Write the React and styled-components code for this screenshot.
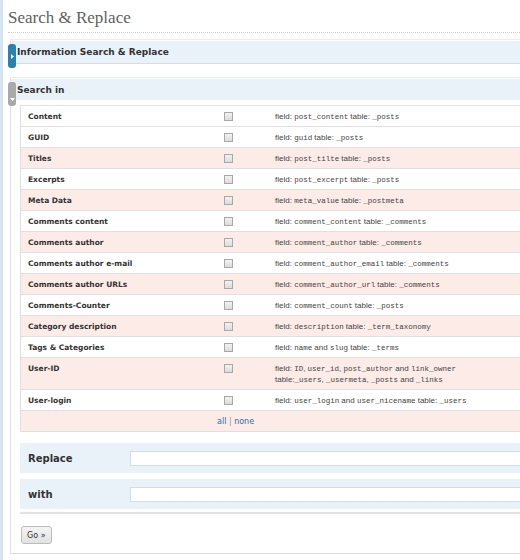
import React from 'react';
import styled, { createGlobalStyle } from 'styled-components';

const GlobalStyle = createGlobalStyle`
  html, body { margin: 0; padding: 0; background: #fff; }
  body { overflow: hidden; font-family: "DejaVu Sans", sans-serif; color: #333; }
  * { box-sizing: border-box; }
`;

const Page = styled.div`
  width: 520px;
  min-height: 560px;
  overflow: hidden;
  border-left: 3px solid #d5e4f1;
  padding-left: 5px;
`;

const Title = styled.h2`
  margin: 0;
  padding: 8px 0 4px;
  font: normal 17px/20px "Liberation Serif", serif;
  color: #5f5f5f;
  border-bottom: 1px dotted #cfcfcf;
`;

const Postbox = styled.div`
  position: relative;
  width: 620px;
  margin: ${(p) => p.$mt}px 0 0 2px;
  padding-top: 1px;
  border-top: 1px solid #ececec;
  border-left: 1px solid #e2e2e2;
  border-bottom: ${(p) => (p.$open ? '1px solid #dcdcdc' : 'none')};
`;

const Header = styled.h3`
  margin: 0;
  height: ${(p) => (p.$open ? 21 : 23)}px;
  padding-left: 6px;
  display: flex;
  align-items: center;
  background: #eaf2f9;
  border-bottom: ${(p) => (p.$open ? 'none' : '1px solid #dcdcdc')};
  font: bold 9px "DejaVu Sans", sans-serif;
  color: #333;
`;

const Handle = styled.div`
  position: absolute;
  left: -3px;
  top: 4px;
  width: 8px;
  height: 24px;
  border-radius: 3px;
  background: ${(p) => (p.$open ? '#a9a9a9' : '#2a82ae')};
  display: flex;
  justify-content: center;
  align-items: ${(p) => (p.$open ? 'flex-end' : 'center')};
  padding-bottom: ${(p) => (p.$open ? '4px' : '0')};
`;

const Inside = styled.div`
  padding: 5px 0 9px 9px;
`;

const Table = styled.div`
  border-top: 1px solid #dfdfdf;
  border-left: 1px solid #dfdfdf;
`;

const Row = styled.div`
  display: grid;
  grid-template-columns: 196px 51px 1fr;
  border-bottom: 1px solid #dfdfdf;
  background: ${(p) => (p.$alt ? '#fdebe7' : '#fff')};
  line-height: 11px;
`;

const Cell = styled.div`
  padding: 5px 7px 4px;
  min-height: 20px;
`;

const Label = styled(Cell)`
  font: bold 7.5px/11px "DejaVu Sans", sans-serif;
  color: #333;
`;

const Field = styled(Cell)`
  font: 8px/11px "Liberation Sans", sans-serif;
  color: #444;
`;

const Code = styled.code`
  font-family: "Liberation Mono", monospace;
  font-size: 7.5px;
  line-height: 0;
  color: #444;
`;

const Check = styled.input.attrs({ type: 'checkbox' })`
  appearance: none;
  display: block;
  width: 9px;
  height: 9px;
  margin: 1px 0 0;
  border: 1px solid #a8a8a8;
  background: linear-gradient(#f2f2f2, #dcdcdc);
`;

const Links = styled.div`
  grid-column: 2 / 4;
  padding: 5px 0 4px;
  font: 8px/11px "DejaVu Sans", sans-serif;
  color: #999;
  a { color: #2e6e9e; text-decoration: none; }
`;

const Block = styled.div`
  display: grid;
  grid-template-columns: 110px 1fr;
  align-items: center;
  height: 30px;
  margin-top: ${(p) => p.$mt}px;
  background: #e9f2f9;
`;

const BlockLabel = styled.label`
  padding-left: 8px;
  font: bold 10px "DejaVu Sans", sans-serif;
  color: #333;
`;

const TextInput = styled.input.attrs({ type: 'text' })`
  height: 15px;
  margin: 0;
  border: 1px solid #cfdeea;
  background: #fff;
`;

const Divider = styled.div`
  margin-top: 3px;
  height: 2px;
  background: #e3e3e3;
`;

const Submit = styled.button`
  margin: 12px 0 0 1px;
  height: 18px;
  padding: 0 5px;
  border: 1px solid #bcbcbc;
  border-radius: 3px;
  background: linear-gradient(#f4f4f4, #e2e2e2);
  font: 8px "DejaVu Sans", sans-serif;
  color: #333;
`;

const Arrow = ({ open }) => (
  <svg width="5" height="5" viewBox="0 0 5 5">
    {open ? <polygon points="0,1 5,1 2.5,4" fill="#fff" /> : <polygon points="1,0 4,2.5 1,5" fill="#fff" />}
  </svg>
);

const fields = [
  { label: 'Content', parts: ['field: ', ['post_content'], ' table: ', ['_posts']] },
  { label: 'GUID', parts: ['field: ', ['guid'], ' table: ', ['_posts']] },
  { label: 'Titles', parts: ['field: ', ['post_tilte'], ' table: ', ['_posts']] },
  { label: 'Excerpts', parts: ['field: ', ['post_excerpt'], ' table: ', ['_posts']] },
  { label: 'Meta Data', parts: ['field: ', ['meta_value'], ' table: ', ['_postmeta']] },
  { label: 'Comments content', parts: ['field: ', ['comment_content'], ' table: ', ['_comments']] },
  { label: 'Comments author', parts: ['field: ', ['comment_author'], ' table: ', ['_comments']] },
  { label: 'Comments author e-mail', parts: ['field: ', ['comment_author_email'], ' table: ', ['_comments']] },
  { label: 'Comments author URLs', parts: ['field: ', ['comment_author_url'], ' table: ', ['_comments']] },
  { label: 'Comments-Counter', parts: ['field: ', ['comment_count'], ' table: ', ['_posts']] },
  { label: 'Category description', parts: ['field: ', ['description'], ' table: ', ['_term_taxonomy']] },
  { label: 'Tags & Categories', parts: ['field: ', ['name'], ' and ', ['slug'], ' table: ', ['_terms']] },
  {
    label: 'User-ID',
    parts: ['field: ', ['ID'], ', ', ['user_id'], ', ', ['post_author'], ' and ', ['link_owner'], <br key="br" />, 'table:', ['_users'], ', ', ['_usermeta'], ', ', ['_posts'], ' and ', ['_links']],
  },
  { label: 'User-login', parts: ['field: ', ['user_login'], ' and ', ['user_nicename'], ' table: ', ['_users']] },
];

export default function App() {
  return (
    <>
      <GlobalStyle />
      <Page>
        <Title>Search &amp; Replace</Title>

        <Postbox $mt={6}>
          <Handle><Arrow /></Handle>
          <Header>Information Search &amp; Replace</Header>
        </Postbox>

        <Postbox $mt={13} $open>
          <Handle $open><Arrow open /></Handle>
          <Header $open>Search in</Header>
          <Inside>
            <Table>
              {fields.map((f, i) => (
                <Row key={f.label} $alt={[2, 4, 6, 8, 10, 12].includes(i)}>
                  <Label>{f.label}</Label>
                  <Cell><Check /></Cell>
                  <Field>
                    {f.parts.map((p, j) => (Array.isArray(p) ? <Code key={j}>{p[0]}</Code> : p))}
                  </Field>
                </Row>
              ))}
              <Row $alt>
                <Cell />
                <Links><a href="#all">all</a> | <a href="#none">none</a></Links>
              </Row>
            </Table>

            <Block $mt={11}>
              <BlockLabel>Replace</BlockLabel>
              <TextInput />
            </Block>
            <Block $mt={6}>
              <BlockLabel>with</BlockLabel>
              <TextInput />
            </Block>
            <Divider />
            <Submit>Go »</Submit>
          </Inside>
        </Postbox>
      </Page>
    </>
  );
}
